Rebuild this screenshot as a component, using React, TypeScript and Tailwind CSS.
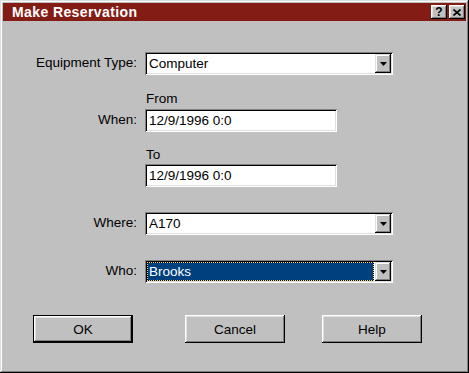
import React from "react";

const raised =
  "shadow-[inset_-1px_-1px_#000,inset_1px_1px_#dfdfdf,inset_-2px_-2px_#808080,inset_2px_2px_#fff]";
const buttonBevel =
  "shadow-[inset_-1px_-1px_#000,inset_1px_1px_#fff,inset_-2px_-2px_#808080,inset_2px_2px_#dfdfdf]";
const sunken =
  "shadow-[inset_1px_1px_#808080,inset_-1px_-1px_#fff,inset_2px_2px_#000,inset_-2px_-2px_#dfdfdf]";

const Arrow: React.FC = () => (
  <svg width="7" height="4" viewBox="0 0 7 4" className="mt-[1px]">
    <path d="M0 0H7L3.5 4Z" fill="#000" />
  </svg>
);

interface ComboProps {
  value: string;
  focused?: boolean;
}

const Combo: React.FC<ComboProps> = ({ value, focused }) => (
  <div className={`flex h-[23px] w-[248px] bg-white p-[2px] ${sunken}`}>
    <div className="flex flex-1 items-stretch pr-[1px]">
      {focused ? (
        <div className="flex flex-1 border border-dotted border-[#f0e070] bg-black">
          <div className="flex flex-1 items-center bg-[#00407f] pl-[1px] text-white">
            {value}
          </div>
        </div>
      ) : (
        <div className="flex flex-1 items-center pl-[2px]">{value}</div>
      )}
    </div>
    <div className={`flex w-[16px] items-center justify-center bg-[#c0c0c0] ${raised}`}>
      <Arrow />
    </div>
  </div>
);

const TextBox: React.FC<{ value: string }> = ({ value }) => (
  <div className={`flex h-[23px] w-[192px] items-center bg-white pl-[4px] ${sunken}`}>
    {value}
  </div>
);

const Row: React.FC<{ label?: string; children: React.ReactNode; className?: string }> = ({
  label,
  children,
  className = "",
}) => (
  <div className={`flex items-center ${className}`}>
    <div className="w-[134px] pb-[2px] text-right">{label}</div>
    <div className="ml-[8px]">{children}</div>
  </div>
);

const Button: React.FC<{ label: string; isDefault?: boolean; className?: string }> = ({
  label,
  isDefault,
  className = "",
}) => (
  <div
    className={`h-[28px] w-[100px] ${isDefault ? "border border-black" : ""} ${className}`}
  >
    <div className={`flex h-full w-full items-center justify-center bg-[#c0c0c0] ${buttonBevel}`}>
      {label}
    </div>
  </div>
);

export default function App() {
  return (
    <div
      className="flex h-[373px] w-[469px] flex-col bg-[#c0c0c0] text-[13.5px] leading-[15px] text-black shadow-[inset_-1px_-1px_#000,inset_1px_1px_#dfdfdf,inset_-2px_-2px_#808080,inset_2px_2px_#fff]"
      style={{ fontFamily: '"Liberation Sans", Arial, sans-serif', padding: 3 }}
    >
      {/* Title bar */}
      <div className="flex h-[18px] items-center bg-[#841c16] pl-[9px] pr-[1px]">
        <span className="flex-1 text-[14px] font-bold tracking-[0.4px] text-white">
          Make Reservation
        </span>
        <div className="flex gap-[2px]">
          <div className={`flex h-[14px] w-[16px] items-center justify-center bg-[#c0c0c0] ${buttonBevel}`}>
            <span className="text-[12px] font-bold leading-none">?</span>
          </div>
          <div className={`flex h-[14px] w-[16px] items-center justify-center bg-[#c0c0c0] ${buttonBevel}`}>
            <svg width="8" height="7" viewBox="0 0 8 7">
              <path d="M0.5 0.5L7.5 6.5M7.5 0.5L0.5 6.5" stroke="#000" strokeWidth="1.6" />
            </svg>
          </div>
        </div>
      </div>

      {/* Body */}
      <div className="flex flex-col pt-[31px]">
        <Row label="Equipment Type:">
          <Combo value="Computer" />
        </Row>

        <Row className="mt-[16px]">
          <div className="pl-[1px]">From</div>
        </Row>
        <Row label="When:" className="mt-[3px]">
          <TextBox value="12/9/1996 0:0" />
        </Row>

        <Row className="mt-[15px]">
          <div className="pl-[1px]">To</div>
        </Row>
        <Row className="mt-[2px]">
          <TextBox value="12/9/1996 0:0" />
        </Row>

        <Row label="Where:" className="mt-[25px]">
          <Combo value="A170" />
        </Row>

        <Row label="Who:" className="mt-[25px]">
          <Combo value="Brooks" focused />
        </Row>

        <div className="mt-[32px] flex">
          <Button label="OK" isDefault className="ml-[30px]" />
          <Button label="Cancel" className="ml-[52px]" />
          <Button label="Help" className="ml-[37px]" />
        </div>
      </div>
    </div>
  );
}
